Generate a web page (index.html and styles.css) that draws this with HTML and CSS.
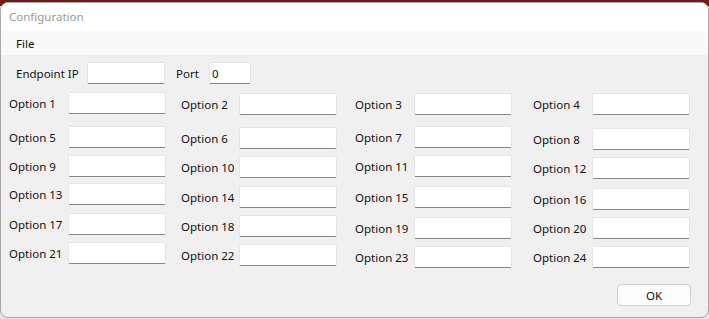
FILE: index.html
```html
<!DOCTYPE html>
<html>
<head>
<meta charset="utf-8">
<link rel="stylesheet" href="styles.css">
</head>
<body>
<div class="window">
  <div class="titlebar">Configuration</div>
  <div class="menubar"><span class="menu-item">File</span></div>
  <div class="content">
    <div class="endpoint-row">
      <span class="ep-label">Endpoint IP</span>
      <div class="input ip-input"></div>
      <span class="port-label">Port</span>
      <div class="input port-input">0</div>
    </div>
    <div class="options">
      <div class="col col1">
        <div class="field"><span class="label">Option 1</span><div class="input"></div></div>
        <div class="field"><span class="label">Option 5</span><div class="input"></div></div>
        <div class="field"><span class="label">Option 9</span><div class="input"></div></div>
        <div class="field"><span class="label">Option 13</span><div class="input"></div></div>
        <div class="field"><span class="label">Option 17</span><div class="input"></div></div>
        <div class="field"><span class="label">Option 21</span><div class="input"></div></div>
      </div>
      <div class="col col2">
        <div class="field"><span class="label">Option 2</span><div class="input"></div></div>
        <div class="field"><span class="label">Option 6</span><div class="input"></div></div>
        <div class="field"><span class="label">Option 10</span><div class="input"></div></div>
        <div class="field"><span class="label">Option 14</span><div class="input"></div></div>
        <div class="field"><span class="label">Option 18</span><div class="input"></div></div>
        <div class="field"><span class="label">Option 22</span><div class="input"></div></div>
      </div>
      <div class="col col3">
        <div class="field"><span class="label">Option 3</span><div class="input"></div></div>
        <div class="field"><span class="label">Option 7</span><div class="input"></div></div>
        <div class="field"><span class="label">Option 11</span><div class="input"></div></div>
        <div class="field"><span class="label">Option 15</span><div class="input"></div></div>
        <div class="field"><span class="label">Option 19</span><div class="input"></div></div>
        <div class="field"><span class="label">Option 23</span><div class="input"></div></div>
      </div>
      <div class="col col4">
        <div class="field"><span class="label">Option 4</span><div class="input"></div></div>
        <div class="field"><span class="label">Option 8</span><div class="input"></div></div>
        <div class="field"><span class="label">Option 12</span><div class="input"></div></div>
        <div class="field"><span class="label">Option 16</span><div class="input"></div></div>
        <div class="field"><span class="label">Option 20</span><div class="input"></div></div>
        <div class="field"><span class="label">Option 24</span><div class="input"></div></div>
      </div>
    </div>
    <div class="footer">
      <button class="ok-button">OK</button>
    </div>
  </div>
</div>
</body>
</html>
```

FILE: styles.css
```css
html, body {
  margin: 0;
  padding: 0;
  height: 100%;
}
body {
  background: linear-gradient(to bottom, #6e1c1c 0, #6e1c1c 6px, #e4e4e4 6px);
  font-family: "Noto Sans", "Open Sans", sans-serif;
  font-size: 11.5px;
  color: #111;
  overflow: hidden;
}
.window {
  margin-top: 2px;
  height: 316px;
  box-sizing: border-box;
  border: 1px solid #a8a8a8;
  border-radius: 8px;
  background: #f0f0f0;
  overflow: hidden;
  display: flex;
  flex-direction: column;
}
.titlebar {
  height: 28px;
  background: #ffffff;
  color: #9a9a9a;
  padding-left: 8px;
  padding-bottom: 1px;
  box-sizing: border-box;
  display: flex;
  align-items: center;
  flex: none;
}
.menubar {
  height: 24px;
  background: #f9f9f9;
  padding-left: 15px;
  display: flex;
  align-items: center;
  flex: none;
}
.content {
  padding-top: 7px;
  flex: 1;
  display: flex;
  flex-direction: column;
}
.endpoint-row {
  display: flex;
  align-items: center;
  padding-left: 15px;
  height: 22px;
}
.ep-label {
  width: 71px;
}
.port-label {
  margin-left: 11px;
  width: 33px;
}
.input {
  box-sizing: border-box;
  height: 22px;
  width: 98px;
  background: #ffffff;
  border: 1px solid #e6e6e6;
  border-bottom: 1px solid #868686;
  border-radius: 2px;
  flex: none;
}
.ip-input {
  width: 78px;
}
.port-input {
  width: 42px;
  padding-left: 2px;
  display: flex;
  align-items: center;
}
.options {
  margin-top: 8px;
  padding-left: 8px;
  display: grid;
  grid-template-columns: 172px 174px 178px auto;
  align-items: start;
}
.col {
  display: flex;
  flex-direction: column;
}
.field {
  display: flex;
  align-items: center;
  height: 22px;
}
.label {
  width: 59px;
  flex: none;
  padding-top: 1px;
}
.col2 .label {
  width: 58px;
}
.col2, .col3, .col4 {
  padding-top: 1px;
}
.col1 .field:nth-child(2) { margin-top: 12px; }
.col1 .field:nth-child(3) { margin-top: 7px; }
.col1 .field:nth-child(4) { margin-top: 6px; }
.col1 .field:nth-child(5) { margin-top: 8px; }
.col1 .field:nth-child(6) { margin-top: 7px; }
.col2 .field:nth-child(2) { margin-top: 12px; }
.col2 .field:nth-child(3) { margin-top: 7px; }
.col2 .field:nth-child(4) { margin-top: 8px; }
.col2 .field:nth-child(5) { margin-top: 7px; }
.col2 .field:nth-child(6) { margin-top: 7px; }
.col3 .field:nth-child(2) { margin-top: 11px; }
.col3 .field:nth-child(3) { margin-top: 7px; }
.col3 .field:nth-child(4) { margin-top: 9px; }
.col3 .field:nth-child(5) { margin-top: 9px; }
.col3 .field:nth-child(6) { margin-top: 7px; }
.col4 .field:nth-child(2) { margin-top: 13px; }
.col4 .field:nth-child(3) { margin-top: 7px; }
.col4 .field:nth-child(4) { margin-top: 9px; }
.col4 .field:nth-child(5) { margin-top: 7px; }
.col4 .field:nth-child(6) { margin-top: 7px; }
.footer {
  display: flex;
  justify-content: flex-end;
  padding-right: 17px;
  margin-top: 16px;
}
.ok-button {
  box-sizing: border-box;
  width: 74px;
  height: 22px;
  background: #fdfdfd;
  border: 1px solid #d0d0d0;
  border-radius: 4px;
  font-family: "Noto Sans", "Open Sans", sans-serif;
  font-size: 11.5px;
  color: #111;
  padding: 0;
}
```
